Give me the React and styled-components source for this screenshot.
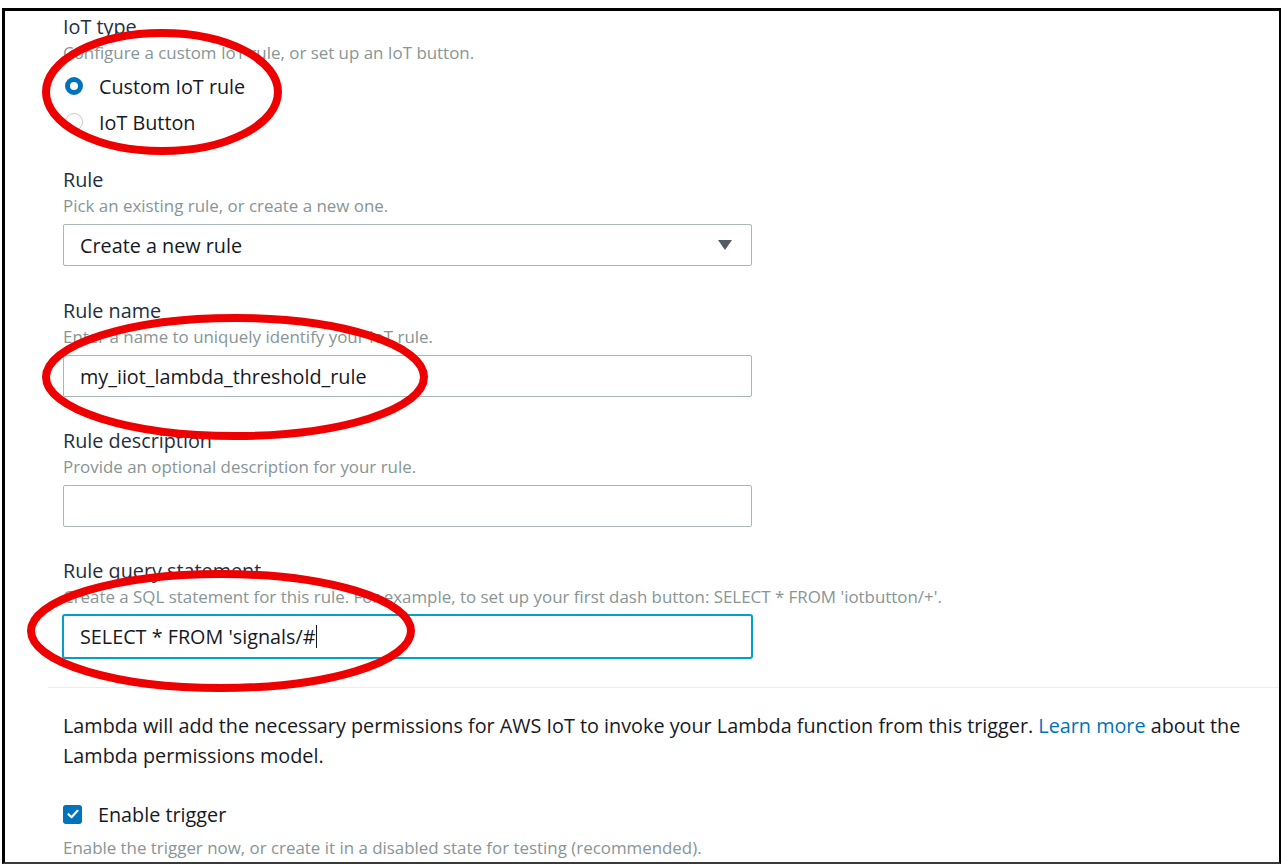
import React from 'react';
import styled, { createGlobalStyle } from 'styled-components';

const GlobalStyle = createGlobalStyle`
  html, body {
    margin: 0;
    padding: 0;
    background: #fff;
  }
  body {
    font-family: 'Open Sans', 'Noto Sans', sans-serif;
    color: #16191f;
  }
`;

const App = () => (
  <>
    <GlobalStyle />
    <Frame>
      <FormSection>
        <Field $first>
          <Label>IoT type</Label>
          <Hint>Configure a custom IoT rule, or set up an IoT button.</Hint>
          <RadioList>
            <RadioRow>
              <Radio $checked />
              Custom IoT rule
            </RadioRow>
            <RadioRow>
              <Radio />
              IoT Button
            </RadioRow>
          </RadioList>
        </Field>

        <Field $space={29}>
          <Label>Rule</Label>
          <Hint>Pick an existing rule, or create a new one.</Hint>
          <Control>
            Create a new rule
            <Caret viewBox="0 0 14 10">
              <path d="M0 0h14L7 10z" />
            </Caret>
          </Control>
        </Field>

        <Field $space={34}>
          <Label>Rule name</Label>
          <Hint>Enter a name to uniquely identify your IoT rule.</Hint>
          <Control>my_iiot_lambda_threshold_rule</Control>
        </Field>

        <Field>
          <Label>Rule description</Label>
          <Hint>Provide an optional description for your rule.</Hint>
          <Control />
        </Field>

        <Field>
          <Label>Rule query statement</Label>
          <Hint>
            Create a SQL statement for this rule. For example, to set up your
            first dash button: SELECT * FROM &apos;iotbutton/+&apos;.
          </Hint>
          <Control $focused>
            SELECT * FROM &apos;signals/#
            <Cursor />
          </Control>
        </Field>
      </FormSection>

      <Divider />

      <LowerSection>
        <Paragraph>
          Lambda will add the necessary permissions for AWS IoT to invoke your
          Lambda function from this trigger. <Link>Learn more</Link> about the
          Lambda permissions model.
        </Paragraph>
        <CheckRow>
          <Checkbox>
            <svg viewBox="0 0 12 10" width="12" height="10">
              <path
                d="M1.5 5.2l3 3L10.5 1.8"
                fill="none"
                stroke="#fff"
                strokeWidth="2.2"
                strokeLinecap="round"
                strokeLinejoin="round"
              />
            </svg>
          </Checkbox>
          Enable trigger
        </CheckRow>
        <Hint $gap={9}>
          Enable the trigger now, or create it in a disabled state for testing
          (recommended).
        </Hint>
      </LowerSection>

      <Annotations viewBox="0 0 1281 864">
        <ellipse cx="162" cy="92" rx="116" ry="59" />
        <ellipse cx="235" cy="377" rx="189" ry="59" />
        <ellipse cx="221" cy="631" rx="190" ry="57" />
      </Annotations>
    </Frame>
  </>
);

export default App;

const Frame = styled.div`
  position: relative;
  box-sizing: border-box;
  margin: 8px 0 0 2px;
  width: 1279px;
  height: 856px;
  border-top: 3px solid #000;
  border-left: 3px solid #000;
  border-right: 2px solid #000;
  border-bottom: 2px solid #3a3a3a;
  padding: 5px 0 0 43px;
  overflow: hidden;
`;

const FormSection = styled.div`
  padding-left: 15px;
  display: flex;
  flex-direction: column;
`;

const Field = styled.div`
  display: flex;
  flex-direction: column;
  margin-top: ${(p) => (p.$first ? 0 : p.$space || 33)}px;
`;

const Label = styled.div`
  font-size: 19.8px;
  line-height: 22px;
  color: #232f3e;
`;

const Hint = styled.div`
  margin-top: ${(p) => p.$gap || 5}px;
  font-size: 16.9px;
  line-height: 20px;
  color: #879596;
`;

const RadioList = styled.div`
  margin-top: 5px;
  display: flex;
  flex-direction: column;
`;

const RadioRow = styled.div`
  height: 36px;
  display: flex;
  align-items: center;
  gap: 16px;
  padding-left: 2px;
  font-size: 19.8px;
  color: #16191f;
`;

const Radio = styled.span`
  box-sizing: border-box;
  width: 18px;
  height: 18px;
  border-radius: 50%;
  border: ${(p) => (p.$checked ? '5.5px solid #0073bb' : '1px solid #c4cccc')};
  background: #fff;
`;

const Control = styled.div`
  position: relative;
  box-sizing: border-box;
  margin-top: 8px;
  width: 689px;
  height: ${(p) => (p.$focused ? 43 : 42)}px;
  display: flex;
  align-items: center;
  padding: 0 16px;
  border: 1px solid ${(p) => (p.$focused ? '#00a1c9' : '#aab7b8')};
  box-shadow: ${(p) => (p.$focused ? '0 0 0 1px #00a1c9' : 'none')};
  border-radius: 2px;
  font-size: 19.8px;
  color: #16191f;
  background: #fff;
`;

const Caret = styled.svg`
  position: absolute;
  right: 19px;
  top: 15px;
  width: 14px;
  height: 10px;
  fill: #545b64;
`;

const Cursor = styled.span`
  display: inline-block;
  width: 1px;
  height: 23px;
  background: #16191f;
`;

const Divider = styled.div`
  margin-top: 29px;
  height: 1px;
  background: #eaeded;
`;

const LowerSection = styled.div`
  padding: 23px 30px 0 15px;
`;

const Paragraph = styled.p`
  margin: 0;
  font-size: 19.8px;
  line-height: 30px;
  color: #16191f;
`;

const Link = styled.a`
  color: #0073bb;
  text-decoration: none;
`;

const CheckRow = styled.div`
  margin-top: 28px;
  height: 30px;
  display: flex;
  align-items: center;
  gap: 16px;
  font-size: 19.8px;
  color: #16191f;
`;

const Checkbox = styled.span`
  width: 19px;
  height: 19px;
  border-radius: 3px;
  background: #0073bb;
  display: flex;
  align-items: center;
  justify-content: center;
`;

const Annotations = styled.svg`
  position: absolute;
  left: -5px;
  top: -11px;
  width: 1281px;
  height: 864px;
  pointer-events: none;
  fill: none;
  stroke: #ee0000;
  stroke-width: 8;
`;
